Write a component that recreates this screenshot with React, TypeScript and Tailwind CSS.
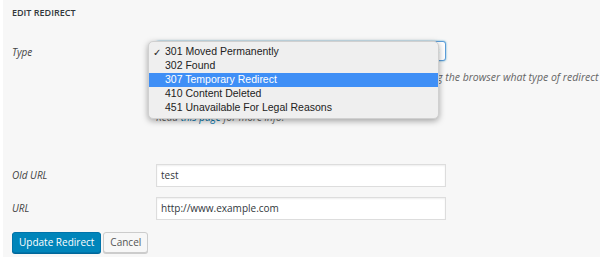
const OPTIONS = [
  { code: '301', label: 'Moved Permanently', checked: true },
  { code: '302', label: 'Found' },
  { code: '307', label: 'Temporary Redirect', active: true },
  { code: '410', label: 'Content Deleted' },
  { code: '451', label: 'Unavailable For Legal Reasons' },
]

function TypeMenu() {
  return (
    <div className="absolute left-[-9px] top-[-1px] w-[291px] rounded-[5px] bg-[#efefef] py-[3px] shadow-[0_2px_6px_rgba(0,0,0,0.35)] border border-[#d0d0d0] font-['Liberation_Sans',sans-serif] text-[10.5px]">
      {OPTIONS.map((o) => (
        <div
          key={o.code}
          className={`flex items-center h-[14px] ${o.active ? 'bg-[#3f8ff6] text-white' : 'text-[#222]'}`}
        >
          <span className="w-[16px] pl-[4px] text-[10px]">{o.checked ? '✓' : ''}</span>
          <span>{o.code} {o.label}</span>
        </div>
      ))}
    </div>
  )
}

export default function App() {
  return (
    <div className="w-[600px] h-[261px] bg-white font-['Open_Sans',sans-serif] overflow-hidden">
      <div className="ml-[3px] h-[257px] bg-[#f7f7f7] pl-[9px] pt-[6px]">
        <h3 className="text-[9px] font-semibold uppercase text-[#32373c] leading-[14px]">Edit Redirect</h3>

        <div className="flex mt-[21px]">
          <div className="w-[144px] shrink-0 pt-[4px] text-[10px] italic text-[#444] leading-[14px]">Type</div>
          <div className="flex-1 min-w-0">
            <div className="relative w-[290px] h-[20px] rounded-[3px] border border-[#5b9dd9] shadow-[0_0_2px_rgba(30,140,190,0.8)] bg-white">
              <span className="absolute right-[4px] top-[3px] text-[9px] leading-[12px] text-[#333]">⬍</span>
              <TypeMenu />
            </div>
            <p className="mt-[6px] text-[10.5px] italic text-[#666] leading-[20px] whitespace-nowrap">
              <span className="inline-block w-[281px] overflow-hidden align-bottom">Used when redirecting a URL, tellin</span>g the browser what type of redirect
            </p>
            <p className="text-[10px] italic text-[#666] leading-[20px]">it is.</p>
            <p className="text-[10px] italic text-[#666] leading-[20px]">
              Read <span className="text-[#0073aa]">this page</span> for more info.
            </p>
          </div>
        </div>

        <div className="flex items-center mt-[37px]">
          <div className="w-[144px] shrink-0 text-[10px] italic text-[#444]">Old URL</div>
          <div className="w-[290px] h-[23px] border border-[#ddd] bg-white shadow-[inset_0_1px_2px_rgba(0,0,0,0.07)] px-[4px] flex items-center text-[10px] text-[#32373c]">test</div>
        </div>
        <div className="flex items-center mt-[10px]">
          <div className="w-[144px] shrink-0 text-[10px] italic text-[#444]">URL</div>
          <div className="w-[290px] h-[23px] border border-[#ddd] bg-white shadow-[inset_0_1px_2px_rgba(0,0,0,0.07)] px-[4px] flex items-center text-[10px] text-[#32373c]">http://www.example.com</div>
        </div>

        <div className="flex gap-[2px] mt-[12px]">
          <button className="h-[21px] px-[6px] rounded-[3px] bg-[#0085ba] border border-[#0073aa] text-white text-[10px] shadow-[0_1px_0_#006799]">Update Redirect</button>
          <button className="h-[21px] px-[6px] rounded-[3px] bg-[#f7f7f7] border border-[#ccc] text-[#555] text-[10px] shadow-[0_1px_0_#ccc]">Cancel</button>
        </div>
      </div>
    </div>
  )
}
